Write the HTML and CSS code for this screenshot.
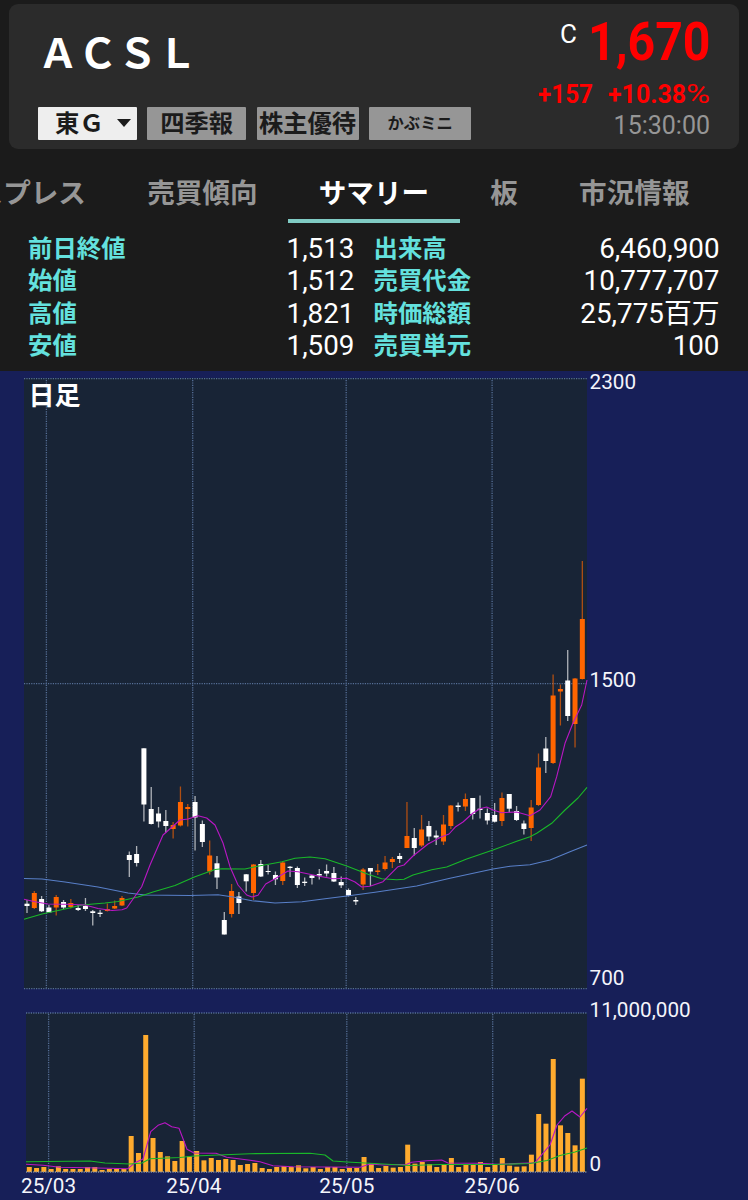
FILE: index.html
```html
<!DOCTYPE html>
<html lang="ja">
<head>
<meta charset="utf-8">
<title>ACSL</title>
<link rel="stylesheet" href="styles.css">
</head>
<body>
<header class="card">
  <div class="info">
    <h1 class="name">ＡＣＳＬ</h1>
    <div class="badges">
      <div class="badge market"><span>東Ｇ</span><svg class="caret" viewBox="0 0 14 8"><path d="M0 0H14L7 8Z"/></svg></div>
      <div class="badge">四季報</div>
      <div class="badge wide">株主優待</div>
      <div class="badge wide small">かぶミニ</div>
    </div>
  </div>
  <div class="quote">
    <div class="price-row">
      <span class="flag">C</span>
      <svg class="price" viewBox="0 0 122 56"><text x="0" y="45" textLength="122.5" lengthAdjust="spacingAndGlyphs">1,670</text></svg>
    </div>
    <svg class="change" viewBox="0 0 174 28">
      <text x="2" y="24.5" textLength="55" lengthAdjust="spacingAndGlyphs">+157</text>
      <text x="72" y="24.5" textLength="78" lengthAdjust="spacingAndGlyphs">+10.38</text>
      <text class="pct" x="150" y="24.5" textLength="24" lengthAdjust="spacingAndGlyphs">%</text>
    </svg>
    <div class="time">15:30:00</div>
  </div>
</header>
<nav class="tabs">
  <div class="tab">エクスプレス</div>
  <div class="tab">売買傾向</div>
  <div class="tab active">サマリー</div>
  <div class="tab">板</div>
  <div class="tab">市況情報</div>
</nav>
<section class="summary">
  <dl class="col">
    <div class="row"><dt>前日終値</dt><dd>1,513</dd></div>
    <div class="row"><dt>始値</dt><dd>1,512</dd></div>
    <div class="row"><dt>高値</dt><dd>1,821</dd></div>
    <div class="row"><dt>安値</dt><dd>1,509</dd></div>
  </dl>
  <dl class="col">
    <div class="row"><dt>出来高</dt><dd>6,460,900</dd></div>
    <div class="row"><dt>売買代金</dt><dd>10,777,707</dd></div>
    <div class="row"><dt>時価総額</dt><dd>25,775百万</dd></div>
    <div class="row"><dt>売買単元</dt><dd>100</dd></div>
  </dl>
</section>
<svg class="chart" viewBox="0 371 748 829">
  <rect class="pane" x="24" y="378" width="563" height="611"/>
  <rect class="pane" x="26" y="1013" width="561" height="159"/>
  <path class="grid" d="M24 378.7H587M24 683.7H587M24 988.7H587M46.4 380V988M192.7 380V988M346.2 380V988M492.1 380V988M26 1013H587M48.6 1014V1172M194.2 1014V1172M346.8 1014V1172M492.7 1014V1172"/>
  <g id="volume"></g>
  <path class="grid base" d="M26 1172H587"/>
  <g id="candles"></g>
  <polyline class="ma long" points="24,878.5 42,879 65,882 98,887 128,893 145,895 190,895.5 218,894.7 233,897 252,900.7 275,903 302,901.7 325,898.7 347,896 375,892.3 416.7,886 450,878.3 493,869 510,866.3 530,864.7 550,860 570,851.7 587,845"/>
  <polyline class="ma mid" points="24,919.3 42,914 65,909 82,905 105,903 118,901.5 138,897 153,892 175,885.5 195,876.7 215,869.5 222,868.7 245,869 255,866.7 282,861.7 295,858.3 310,857 325,858.7 346,865.7 368,874.3 381.7,878.7 396.7,879.7 404,879.3 413,875 431.7,869.7 446.7,867 466.7,859 493,850 516.7,841.3 530,836.7 536.7,833.3 551.7,823.3 565,810 578,798 587,787.3"/>
  <polyline class="ma short" points="24,899.3 35,901.7 48,904 65,904.3 85,905 98,908.5 112,910.5 122,909.7 126.7,908 141.7,886.7 150,865 163,835 180,820 188,819 198,815.7 206.7,818 215,825 223,843 230,866.7 238,885 246.7,895 252,897 258,895.3 265.7,884 275,878.7 288,871 298,871.7 318,876 333,878.7 346.7,878.3 355,882 361.7,887 370,886.3 383,881.7 398,866.7 404,865 413,856 428,844 441.7,836.7 449,834 455.7,826.7 463,822 473,813 480,808.7 486.7,807 493,810 501.7,812.7 516.7,812 530,815.7 540,810 550.7,796.7 556.7,776.7 565,743.3 573,723 581.7,705 587,680"/>
  <polyline class="ma short" points="26,1164.3 43,1165.3 60,1167.3 87,1167.7 128,1168.7 135,1162.7 143,1159 150.7,1131.7 158,1125.3 165,1122.7 171.7,1126.7 179,1128.3 187,1149.3 194,1153 216,1153.3 226.7,1157.3 250,1160.3 260,1161.7 273,1165.7 293,1166.7 360,1167.3 370,1164 383,1165 406.7,1164.3 411.7,1162.3 426.7,1160.7 441.7,1160 448,1163 480,1163.3 497,1164.3 535,1162.7 550,1145 557,1125 565,1115.7 572,1111 580,1117 587,1108.3"/>
  <polyline class="ma mid" points="26,1161.7 90,1161 105,1163 130,1164 142,1163 150,1158.7 180,1157.5 194,1156 225,1154.7 250,1153.7 310,1153.3 325,1155 333,1161 347,1162 383,1164 410,1165.5 440,1164.5 495,1164.5 530,1163.5 547,1160.5 560,1155.5 575,1152 587,1148"/>
  <text class="period" x="28.5" y="405">日足</text>
  <g class="axis">
    <text x="589.5" y="388.7">2300</text>
    <text x="589.5" y="686.7">1500</text>
    <text x="589.5" y="984.7">700</text>
    <text x="589.5" y="1016.5">11,000,000</text>
    <text x="589.5" y="1171">0</text>
    <text x="21" y="1192.7">25/03</text>
    <text x="166.3" y="1192.7">25/04</text>
    <text x="319.3" y="1192.7">25/05</text>
    <text x="464.5" y="1192.7">25/06</text>
  </g>
</svg>
<script src="chart.js"></script>
</body>
</html>
```
FILE: styles.css
```css
* { box-sizing: border-box; }
body {
  margin: 0;
  padding-top: 4px;
  width: 748px;
  height: 1200px;
  overflow: hidden;
  background: #1b1b1b;
  color: #fff;
  font-family: Roboto, "Noto Sans CJK JP", sans-serif;
}
svg { display: block; }
.card {
  display: flex;
  justify-content: space-between;
  height: 145px;
  margin: 0 9px;
  padding: 0 29px;
  border-radius: 9px;
  background: #2b2b2b;
}
.name {
  margin: 23px 0 0;
  height: 80px;
  font: 700 40px/48px "Noto Sans CJK JP", sans-serif;
  letter-spacing: -0.2px;
}
.badges { display: flex; gap: 10.6px; }
.badge {
  display: flex;
  align-items: center;
  justify-content: center;
  width: 98.7px;
  height: 33px;
  border-radius: 1px;
  background: #969696;
  color: #1b1b1b;
  font: 700 24.3px/30px "Noto Sans CJK JP", sans-serif;
  white-space: nowrap;
  padding-bottom: 4px;
}
.wide { width: 102px; }
.small { font-size: 16.3px; padding-bottom: 3px; }
.market { background: #eee; justify-content: flex-end; padding-right: 6px; gap: 13px; }
.caret { width: 14px; height: 8px; margin-top: 3px; fill: #1b1b1b; }
.quote { display: flex; flex-direction: column; align-items: flex-end; }
.price-row { display: flex; height: 74px; padding-top: 11px; gap: 11px; }
.flag { font-size: 26px; line-height: 38px; }
.price { width: 122px; height: 56px; overflow: visible; }
.price text { font: 700 53.5px Roboto, sans-serif; fill: #f00; }
.change { width: 174px; height: 28px; overflow: visible; }
.change text { font: 700 25.6px Roboto, sans-serif; fill: #f00; }
.change .pct { font-weight: 400; }
.time { margin-top: 6px; font-size: 25px; line-height: 28px; color: #969696; }
.tabs {
  display: flex;
  height: 74px;
  margin-left: -109.4px;
  font: 700 27.6px/54px "Noto Sans CJK JP", sans-serif;
  color: #969696;
}
.tab { flex: none; padding: 15px 30.6px 0; white-space: nowrap; }
.active { color: #fff; border-bottom: 4px solid #80cbc4; }
.summary { display: grid; grid-template-columns: 326.5px 346px; column-gap: 19px; height: 148px; padding: 9px 28px 0 28px; }
.col { margin: 0; }
.row { display: flex; justify-content: space-between; height: 32.3px; line-height: 32.3px; white-space: nowrap; }
dt { font: 700 24.4px/30.3px "Noto Sans CJK JP", sans-serif; color: #64e1de; }
dd { margin: 0; font-size: 27.8px; line-height: 34px; }
.chart { width: 748px; height: 829px; background: #171f58; }
.pane { fill: #182436; }
.grid { fill: none; stroke: #566f97; stroke-width: 1.3; stroke-dasharray: 1.2 1.2; }
.base { stroke: #8892a6; }
.bar { fill: #ffab2e; }
.up { fill: #ff6500; }
.down { fill: #fff; }
.wick { opacity: .65; }
.ma { fill: none; stroke-width: 1.1; stroke-linejoin: round; }
.short { stroke: #b917c4; }
.mid { stroke: #19b829; }
.long { stroke: #587fc8; }
.axis text { font: 400 20.7px Roboto, sans-serif; fill: #f4f5fb; }
.period { font: 700 26px "Noto Sans CJK JP", sans-serif; fill: #fff; }
```
FILE: chart.js
```js
const NS = "http://www.w3.org/2000/svg";

// direction, high, body top, body bottom, low
const candles = `w 900 903.7 906 913|o 891 893 908 909|w 896 899 911.3 912|w 905 907.5 912.5 913|o 895 897 907.5 915.5|w 900 902 907.5 909|o 899 903 907 908.5|w 905 908 910 911|w 898 906 909 911|w 910 911.3 913 925.5|w 910 912.7 914 917|o 903.5 909 911 911.5|o 900.5 906 908.5 909|o 896 898 905.5 906|w 851.5 855 860 877|w 846 854 863 866.5|w 748.3 748.3 804.5 821.5|w 787 809 824 824.5|w 807 813.5 821.5 827.5|w 810 821 826 832.5|o 822 825 829 838.5|o 786.5 802 825.5 826.5|o 804 807 809 826.5|w 796 802 817.5 850.5|w 820.5 824 842 847|o 840.5 855.5 871.5 874.5|w 856 863.3 877.5 889|w 912 920 934.5 934.5|o 884 891 914 917.5|w 892 896.5 903 914|w 874 874.3 881.3 891.5|o 864 864.5 893 900|w 860 864 876.5 877|w 865 871 872 874.5|w 871.5 875 879.3 885|o 861.5 862.5 881 885|w 866 866.7 868 877|w 866.5 868 885 888|w 877.5 881.7 883 886|w 875 875.5 878 884.5|w 869 874 875.5 879.5|w 864.5 871 873.5 876.5|w 867 873 881.5 882|w 876.5 882 885.3 888|w 888.5 890 895.5 896.5|w 897 900 901.5 905|o 868 869.5 884.5 890|w 868 868 871.5 886|o 864 870.5 872 875|o 856 862.5 869 870.5|o 857 859 862 868|w 853 856 859 863|o 802 836 848 848|w 828 838 848 855.5|o 815 829.5 845.5 847|w 821 826 836.5 841|w 830.5 835.5 837.5 845|o 815 824.5 841.5 845|o 805 805.5 826 829|w 802.5 805.5 807 811.5|o 793.5 799 806.5 811|w 798 798 814 819.5|w 795.5 808.7 810 818.5|w 808.5 813 820.5 824.5|w 803 815 821.7 822.5|o 792.5 798 821 826|w 794 794 808.7 812|w 806 811 820 821|w 820.5 823.5 829 834.5|o 800 807.5 828 841|o 753.5 767.5 805 806|w 737 748.5 761 773|o 674.5 695.5 763 764|o 684.5 689 691.5 725.5|w 650 680.5 716 721|o 678 678.5 724 747.5|o 561 619 679 679.5`;

// bar heights in thirds of a pixel
const volumes = [15,12,15,9,17,9,9,9,15,15,6,9,9,9,108,57,411,102,60,47,33,93,47,63,35,42,36,39,36,21,24,27,12,9,15,18,15,20,11,15,9,15,15,9,12,12,45,26,12,18,13,15,82,25,30,24,15,21,42,15,22,22,30,15,21,42,19,16,17,52,174,145,339,140,117,80,280];

function rect(parent, cls, x, y, w, h) {
  const r = document.createElementNS(NS, "rect");
  r.setAttribute("class", cls);
  r.setAttribute("x", x.toFixed(2));
  r.setAttribute("y", y);
  r.setAttribute("width", w);
  r.setAttribute("height", h);
  parent.appendChild(r);
}

const candleLayer = document.getElementById("candles");
candles.split("|").forEach((row, i) => {
  const [dir, ...v] = row.split(" ");
  const [high, top, bottom, low] = v.map(Number);
  const x = 27 + i * 7.307;
  const cls = dir === "o" ? "up" : "down";
  rect(candleLayer, cls + " wick", x - 0.65, high, 1.3, low - high);
  rect(candleLayer, cls, x - 2.5, top, 5, bottom - top);
});

const volumeLayer = document.getElementById("volume");
volumes.forEach((v, i) => {
  rect(volumeLayer, "bar", 29.3 + i * 7.277 - 2.5, 1172 - v / 3, 5, v / 3);
});
```
